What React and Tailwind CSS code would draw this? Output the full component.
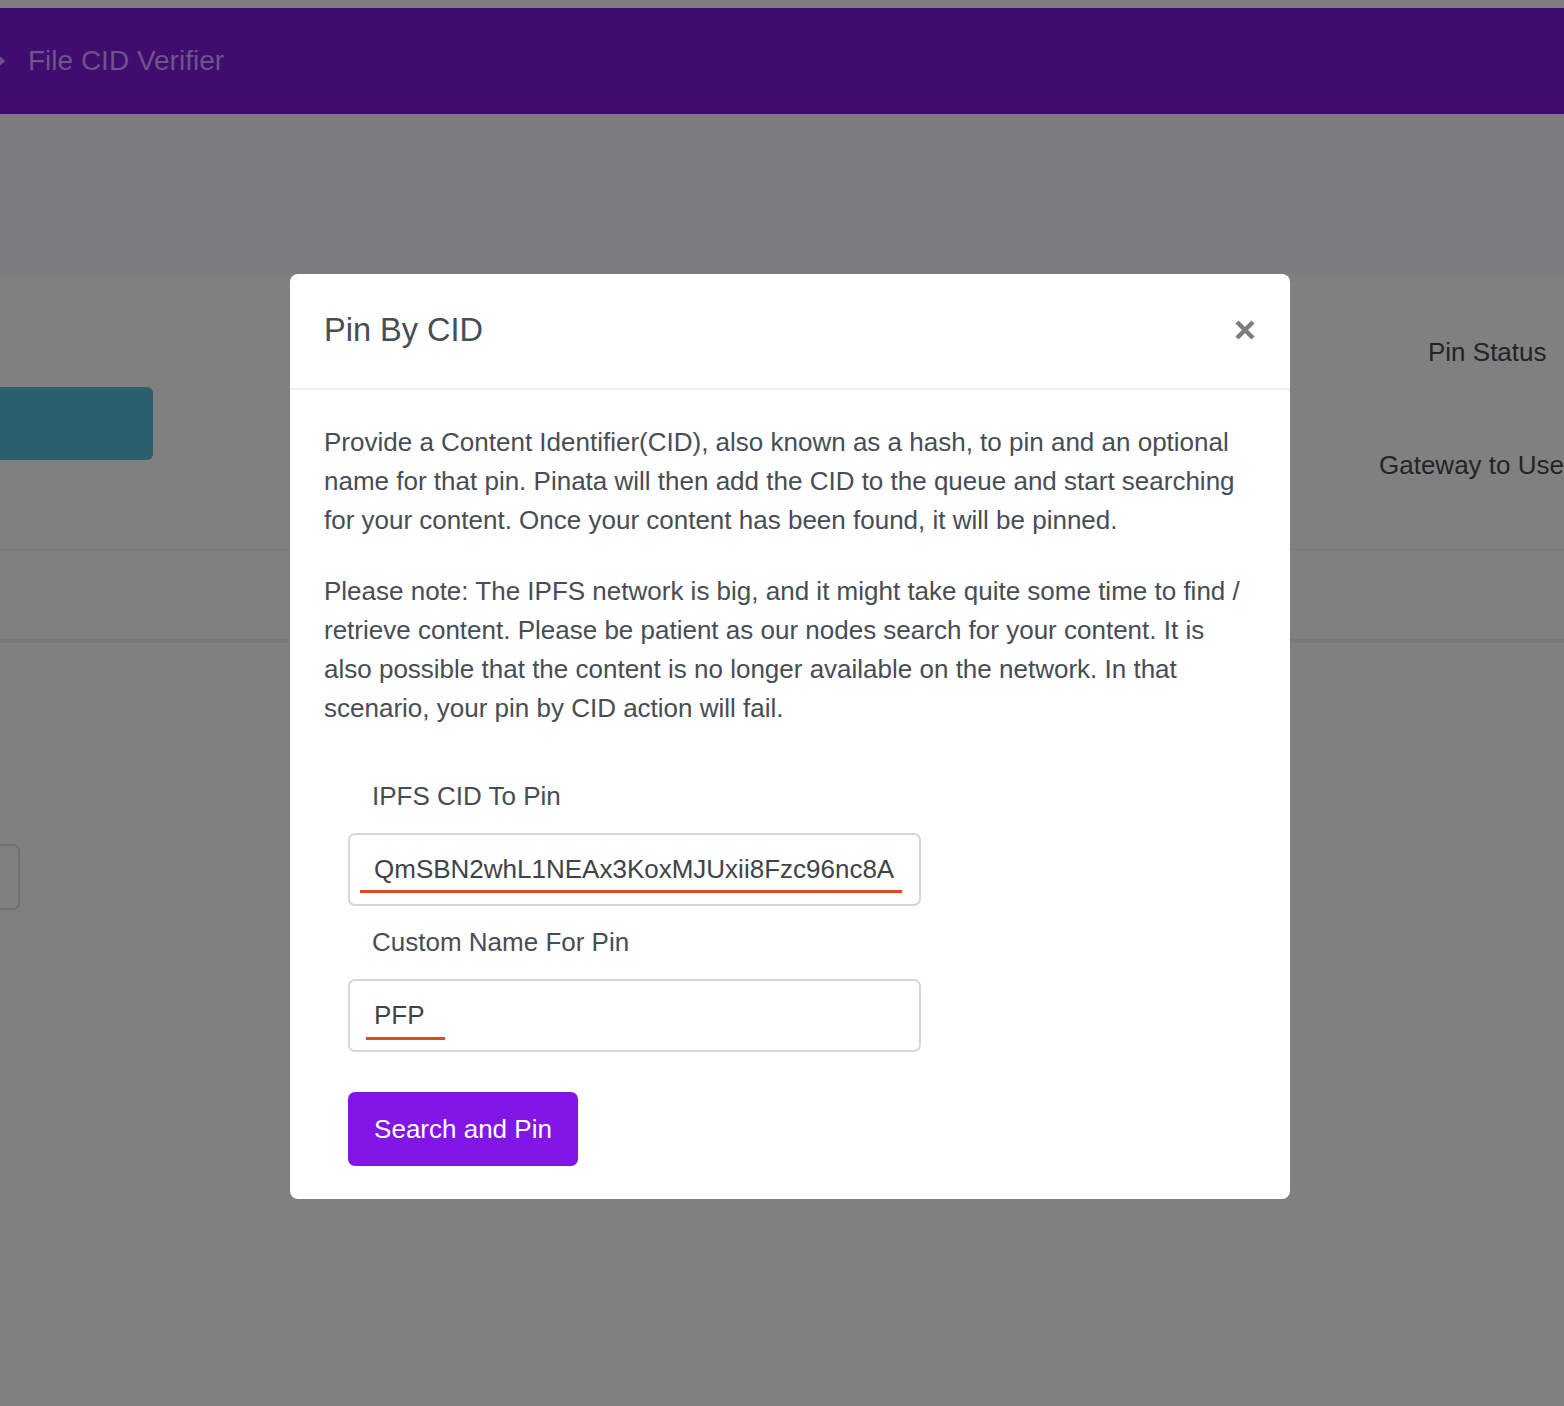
import React from "react";

export default function App() {
  const font = { fontFamily: '"Liberation Sans", Arial, Helvetica, sans-serif' };
  return (
    <div className="relative w-[1564px] h-[1406px] overflow-hidden bg-[#808080]" style={font}>
      {/* background page */}
      <div className="h-[8px] bg-[#7f7f7f]" />
      <header className="h-[106px] bg-[#410c6f] flex items-center">
        <svg width="10" height="14" viewBox="0 0 10 14" className="-ml-[4px]">
          <path d="M1 2 L7 7 L1 12" stroke="#6b5487" strokeWidth="3" fill="none" />
        </svg>
        <span className="ml-[22px] text-[28px] text-[#6c5587]">File CID Verifier</span>
      </header>
      <div className="h-[161px] bg-[#7d7d80]" />
      <section className="bg-[#808080]">
        <div className="h-[275px] flex justify-between border-b border-[#797979]">
          <div className="pt-[112px]">
            <div className="w-[153px] h-[73px] bg-[#2a5f6d] rounded-r-[6px]" />
          </div>
          <div className="w-[185px] shrink-0 flex flex-col pt-[62px] text-[26px] leading-[30px] text-[#242424] whitespace-nowrap">
            <div className="pl-[49px]">Pin Status</div>
            <div className="mt-[83px]">Gateway to Use</div>
          </div>
        </div>
        <div className="h-[89px]" />
      </section>
      <div className="h-[4px] bg-[#7a7a7d]" />
      <div className="pt-[201px]">
        <div className="w-[22px] h-[66px] -ml-[2px] border-2 border-[#6f6f74] rounded-r-[7px]" />
      </div>

      {/* modal */}
      <div className="absolute left-[290px] top-[274px] w-[1000px] h-[925px] bg-white rounded-[8px] text-[#474d54]">
        <div className="h-[116px] flex items-center justify-between pl-[34px] pr-[34px] border-b-2 border-[#eeeef3]">
          <h2 className="text-[32.5px] leading-none -mt-[2px]">Pin By CID</h2>
          <svg width="22" height="22" viewBox="0 0 22 22" className="-mt-[2px]">
            <path d="M3 3 L19 19 M19 3 L3 19" stroke="#7d7d7d" strokeWidth="4.5" strokeLinecap="butt" />
          </svg>
        </div>
        <div className="pl-[34px] pr-[40px] pt-[33px] text-[26px] leading-[39px]">
          <p>
            Provide a Content Identifier(CID), also known as a hash, to pin and an optional name for that pin. Pinata will then add the CID to the queue and start searching for your content. Once your content has been found, it will be pinned.
          </p>
          <p className="mt-[32px]">
            Please note: The IPFS network is big, and it might take quite some time to find / retrieve content. Please be patient as our nodes search for your content. It is also possible that the content is no longer available on the network. In that scenario, your pin by CID action will fail.
          </p>
          <div className="mt-[43px] pl-[24px] text-[26px]">
            <div className="pl-[24px] h-[50px] leading-[50px]">IPFS CID To Pin</div>
            <div className="relative mt-[12px] w-[573px] h-[73px] border-2 border-[#d3d6da] rounded-[7px] flex items-center pl-[24px]">
              <span className="text-[26px] text-[#3f444a]">QmSBN2whL1NEAx3KoxMJUxii8Fzc96nc8A</span>
              <div className="absolute left-[10px] top-[55px] w-[542px] h-[3px] bg-[#e5432b]" />
            </div>
            <div className="pl-[24px] mt-[11px] h-[50px] leading-[50px]">Custom Name For Pin</div>
            <div className="relative mt-[12px] w-[573px] h-[73px] border-2 border-[#d3d6da] rounded-[7px] flex items-center pl-[24px]">
              <span className="text-[26px] text-[#3f444a]">PFP</span>
              <div className="absolute left-[16px] top-[56px] w-[79px] h-[3px] bg-[#e5432b]" />
            </div>
            <button className="mt-[40px] w-[230px] h-[74px] bg-[#8116e7] rounded-[7px] text-white text-[26px]">
              Search and Pin
            </button>
          </div>
        </div>
      </div>
    </div>
  );
}
